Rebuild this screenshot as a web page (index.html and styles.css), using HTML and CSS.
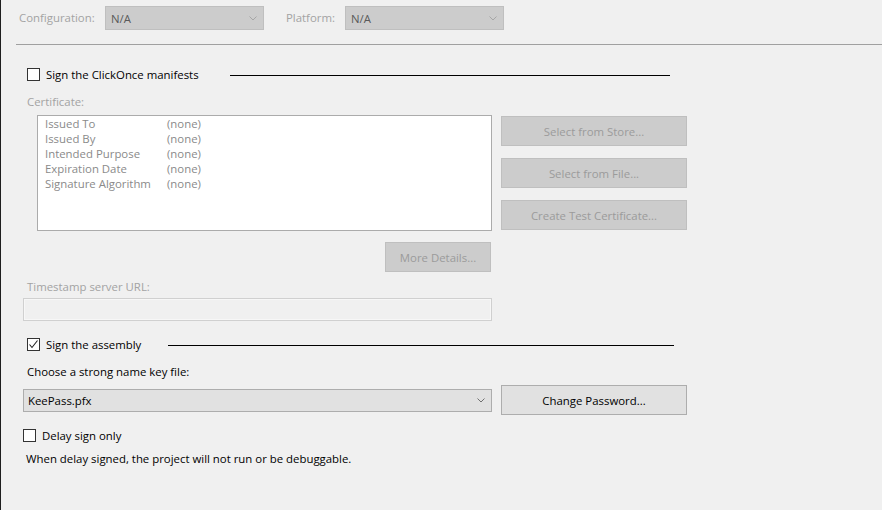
FILE: index.html
```html
<!DOCTYPE html>
<html>
<head>
<meta charset="utf-8">
<link rel="stylesheet" href="styles.css">
</head>
<body>
<div class="page">
  <div class="topbar">
    <span class="lbl dis cfg-lbl">Configuration:</span>
    <div class="dd dd-dis"><span>N/A</span><svg class="chev" width="8" height="5" viewBox="0 0 8 5"><polyline points="0.5,0.5 4,4 7.5,0.5" fill="none" stroke="#a6a6a6" stroke-width="1"/></svg></div>
    <span class="lbl dis plat-lbl">Platform:</span>
    <div class="dd dd-dis"><span>N/A</span><svg class="chev" width="8" height="5" viewBox="0 0 8 5"><polyline points="0.5,0.5 4,4 7.5,0.5" fill="none" stroke="#a6a6a6" stroke-width="1"/></svg></div>
  </div>
  <div class="sep"></div>

  <div class="checkrow row-clickonce">
    <div class="cbgroup g-clickonce"><span class="cb"></span><span class="cbtext">Sign the ClickOnce manifests</span></div>
    <div class="rule rule-clickonce"></div>
  </div>

  <div class="lbl dis field-lbl cert-lbl">Certificate:</div>
  <div class="certgrid">
    <div class="certbox">
      <div class="certrow"><span class="ck">Issued To</span><span>(none)</span></div>
      <div class="certrow"><span class="ck">Issued By</span><span>(none)</span></div>
      <div class="certrow"><span class="ck">Intended Purpose</span><span>(none)</span></div>
      <div class="certrow"><span class="ck">Expiration Date</span><span>(none)</span></div>
      <div class="certrow"><span class="ck">Signature Algorithm</span><span>(none)</span></div>
    </div>
    <div class="btncol">
      <div class="btn btn-dis">Select from Store...</div>
      <div class="btn btn-dis">Select from File...</div>
      <div class="btn btn-dis">Create Test Certificate...</div>
    </div>
  </div>
  <div class="morerow"><div class="btn btn-dis btn-more">More Details...</div></div>

  <div class="lbl dis field-lbl ts-lbl">Timestamp server URL:</div>
  <div class="tsbox"></div>

  <div class="checkrow row-assembly">
    <div class="cbgroup g-assembly"><span class="cb checked"><svg width="11" height="11" viewBox="0 0 11 11"><polyline points="1.5,5.5 4,8.5 9.5,1.5" fill="none" stroke="#222" stroke-width="1.1"/></svg></span><span class="cbtext">Sign the assembly</span></div>
    <div class="rule rule-assembly"></div>
  </div>

  <div class="lbl key-lbl">Choose a strong name key file:</div>
  <div class="keyrow">
    <div class="dd dd-en"><span>KeePass.pfx</span><svg class="chev" width="8" height="5" viewBox="0 0 8 5"><polyline points="0.5,0.5 4,4 7.5,0.5" fill="none" stroke="#707070" stroke-width="1"/></svg></div>
    <div class="btn btn-en">Change Password...</div>
  </div>

  <div class="checkrow row-delay">
    <div class="cbgroup"><span class="cb"></span><span class="cbtext delay-text">Delay sign only</span></div>
  </div>
  <div class="note">When delay signed, the project will not run or be debuggable.</div>
</div>
</body>
</html>
```

FILE: styles.css
```css
* { box-sizing: border-box; }
html, body { margin: 0; padding: 0; }
body {
  width: 882px;
  height: 510px;
  overflow: hidden;
  background: #f0f0f0;
  border-left: 1px solid #1e1e1e;
  font-family: "Open Sans", "Noto Sans", sans-serif;
  font-size: 11.4px;
  color: #000;
}
.page { position: relative; }
.lbl { line-height: 16px; white-space: nowrap; }
.dis { color: #a3a3a3; }

.topbar {
  display: flex;
  align-items: center;
  padding-top: 6px;
  padding-left: 18px;
  height: 30px;
}
.cfg-lbl { width: 86px; }
.plat-lbl { width: 59px; margin-left: 22px; }
.dd {
  height: 24px;
  display: flex;
  align-items: center;
  justify-content: space-between;
  padding: 0 6px 0 5px;
}
.dd-dis {
  width: 159px;
  background: #cccccc;
  border: 1px solid #bfbfbf;
  color: #5a5a5a;
}
.chev { display: block; }

.sep {
  margin-top: 14px;
  margin-left: 15px;
  height: 1px;
  background: #a0a0a0;
}

.checkrow { display: flex; align-items: center; height: 13px; }
.cbgroup { display: flex; align-items: center; }
.cb {
  width: 13px; height: 13px;
  border: 1px solid #333;
  background: #fff;
  display: flex; align-items: center; justify-content: center;
  flex: none;
}
.cb svg { display: block; }
.cbtext { margin-left: 6px; line-height: 16px; white-space: nowrap; }
.rule { height: 1px; background: #000; margin-top: 1px; }

.row-clickonce { margin-top: 23px; padding-left: 26px; }
.g-clickonce { width: 203px; }
.rule-clickonce { width: 440px; }

.field-lbl { padding-left: 26px; }
.cert-lbl { margin-top: 13px; }

.certgrid {
  display: grid;
  grid-template-columns: 455px 186px;
  column-gap: 9px;
  margin-top: 5px;
  padding-left: 36px;
  align-items: start;
}
.certbox {
  height: 116px;
  background: #fff;
  border: 1px solid #ababab;
  padding: 0 0 0 7px;
  color: #8a8a8a;
}
.certrow { display: flex; line-height: 15px; white-space: nowrap; }
.ck { width: 122px; }
.btncol {
  display: flex;
  flex-direction: column;
  gap: 12px;
  margin-top: 1px;
}
.btn {
  height: 30px;
  display: flex;
  align-items: center;
  justify-content: center;
  white-space: nowrap;
}
.btn-dis {
  background: #cccccc;
  border: 1px solid #bfbfbf;
  color: #9b9b9b;
}
.btn-en {
  background: #e1e1e1;
  border: 1px solid #adadad;
  color: #000;
  width: 186px;
}
.morerow {
  width: 490px;
  display: flex;
  justify-content: flex-end;
  margin-top: 11px;
}
.btn-more { width: 106px; }

.ts-lbl { margin-top: 7px; }
.tsbox {
  margin-top: 3px;
  margin-left: 22px;
  width: 469px;
  height: 23px;
  border: 1px solid #d0d0d0;
  background: #f0f0f0;
  box-shadow: inset 0 0 0 1px #f7f7f7;
}

.row-assembly { margin-top: 17px; padding-left: 26px; }
.g-assembly { width: 141px; }
.rule-assembly { width: 506px; }

.key-lbl { margin-top: 13px; padding-left: 26px; }
.keyrow {
  display: flex;
  align-items: center;
  margin-top: 5px;
  padding-left: 22px;
  gap: 9px;
}
.dd-en {
  width: 469px;
  height: 23px;
  background: #e1e1e1;
  border: 1px solid #adadad;
  padding-left: 4px;
  padding-right: 6px;
}

.row-delay { margin-top: 14px; padding-left: 22px; }
.note { margin-top: 9px; padding-left: 25px; line-height: 16px; white-space: nowrap; }
```
